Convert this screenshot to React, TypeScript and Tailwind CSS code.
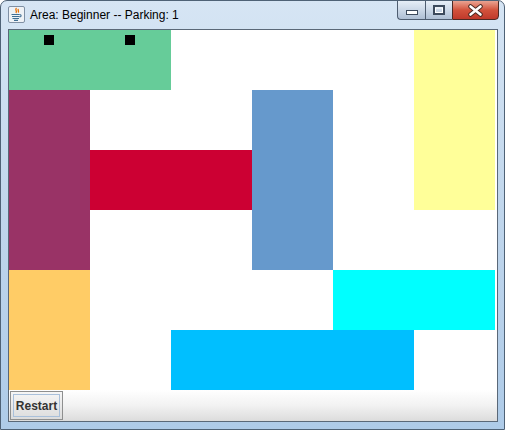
import React from 'react';

type Car = { id: string; cls: string; eyes?: boolean };

// board is a 6x6 grid of 81x60 cells
const cars: Car[] = [
  { id: 'green', cls: 'col-start-1 col-span-2 row-start-1 bg-[#66cc99]', eyes: true },
  { id: 'yellow', cls: 'col-start-6 row-start-1 row-span-3 bg-[#ffff99]' },
  { id: 'purple', cls: 'col-start-1 row-start-2 row-span-3 bg-[#993366]' },
  { id: 'blue', cls: 'col-start-4 row-start-2 row-span-3 bg-[#6699cc]' },
  { id: 'red', cls: 'col-start-2 col-span-2 row-start-3 bg-[#cc0033]' },
  { id: 'orange', cls: 'col-start-1 row-start-5 row-span-2 bg-[#ffcc66]' },
  { id: 'cyan', cls: 'col-start-5 col-span-2 row-start-5 bg-[#00ffff]' },
  { id: 'sky', cls: 'col-start-3 col-span-3 row-start-6 bg-[#00bfff]' },
];

const JavaIcon = () => (
  <svg width="17" height="17" viewBox="0 0 17 17">
    <rect x="0.5" y="0.5" width="16" height="16" rx="1.5" fill="#eef2f6" stroke="#7f90a4" />
    <path d="M8.5 2c-2.2 1.8 1.2 2.8-0.6 5M10.5 3c-1.4 1.2 1 2-0.4 3.5" stroke="#e76f00" strokeWidth="1.3" fill="none" />
    <path d="M3.5 8.5h8M4 10.5h7.5M4.5 12.5h6.5M6 14.3h4" stroke="#3f6e93" strokeWidth="1.2" />
    <path d="M11.5 8.5c2.2 0 2.2 2.4 0 2.4" stroke="#3f6e93" strokeWidth="1.1" fill="none" />
  </svg>
);

const WinControls = () => (
  <div className="flex h-[20px] mr-[5px] -mt-px">
    <div className="w-[28px] h-full flex items-center justify-center border border-[#4e5d70] border-r-0 rounded-bl-[4px] bg-gradient-to-b from-[#e6eef7] via-[#cbd8e7] to-[#aebfd4]">
      <svg width="12" height="6" viewBox="0 0 12 6" className="mt-[5px]">
        <rect x="0.5" y="0.5" width="11" height="4" fill="#fff" stroke="#3c4a5c" />
      </svg>
    </div>
    <div className="w-[27px] h-full flex items-center justify-center border border-[#4e5d70] border-r-0 bg-gradient-to-b from-[#e6eef7] via-[#cbd8e7] to-[#aebfd4]">
      <svg width="12" height="10" viewBox="0 0 12 10">
        <rect x="1" y="1" width="10" height="8" fill="none" stroke="#3c4a5c" strokeWidth="2" />
        <rect x="2.5" y="3" width="7" height="4.5" fill="none" stroke="#fff" strokeWidth="1" />
      </svg>
    </div>
    <div className="w-[47px] h-full flex items-center justify-center border border-[#4e2a24] rounded-br-[4px] bg-gradient-to-b from-[#e9a392] via-[#d2523c] to-[#c0392b]">
      <svg width="17" height="13" viewBox="0 0 17 13">
        <path d="M3.5 2.5l10 8M13.5 2.5l-10 8" stroke="#4a2a22" strokeWidth="4.5" strokeLinecap="round" />
        <path d="M3.5 2.5l10 8M13.5 2.5l-10 8" stroke="#fff" strokeWidth="2.6" strokeLinecap="round" />
      </svg>
    </div>
  </div>
);

export default function App() {
  return (
    <div className="w-[505px] h-[430px] flex flex-col border border-[#4f6276] rounded-t-[7px] bg-gradient-to-b from-[#d6e5f4] via-[#c0d6ec] to-[#aecbe8] overflow-hidden font-['Liberation_Sans',Arial,sans-serif]">
      {/* title bar */}
      <div className="h-[28px] flex items-start justify-between">
        <div className="flex items-center gap-[5px] pl-[7px] pt-[5px]">
          <JavaIcon />
          <span className="text-[12px] leading-none text-black">Area: Beginner -- Parking: 1</span>
        </div>
        <WinControls />
      </div>

      {/* client area */}
      <div className="ml-[7px] mr-[6px] border border-[#5a6878] bg-white flex flex-col">
        <div className="w-[486px] h-[360px] grid grid-cols-[repeat(6,81px)] grid-rows-[repeat(6,60px)]">
          {cars.map(car => (
            <div key={car.id} className={car.cls}>
              {car.eyes && (
                <div className="flex gap-[71px] pl-[35px] pt-[5px]">
                  <div className="w-[10px] h-[10px] bg-black" />
                  <div className="w-[10px] h-[10px] bg-black" />
                </div>
              )}
            </div>
          ))}
        </div>
        <div className="h-[31px] flex items-center pl-px bg-gradient-to-b from-white via-[#f2f2f2] to-[#dcdcdc]">
          <button className="w-[53px] h-[29px] border border-[#8e8f8f] bg-gradient-to-b from-[#f6f6f6] to-[#dcdcdc] flex items-center justify-center p-[2px]">
            <span className="w-full h-full flex items-center justify-center border border-[#a9c0da] text-[12px] font-bold text-[#333]">
              Restart
            </span>
          </button>
        </div>
      </div>
    </div>
  );
}
